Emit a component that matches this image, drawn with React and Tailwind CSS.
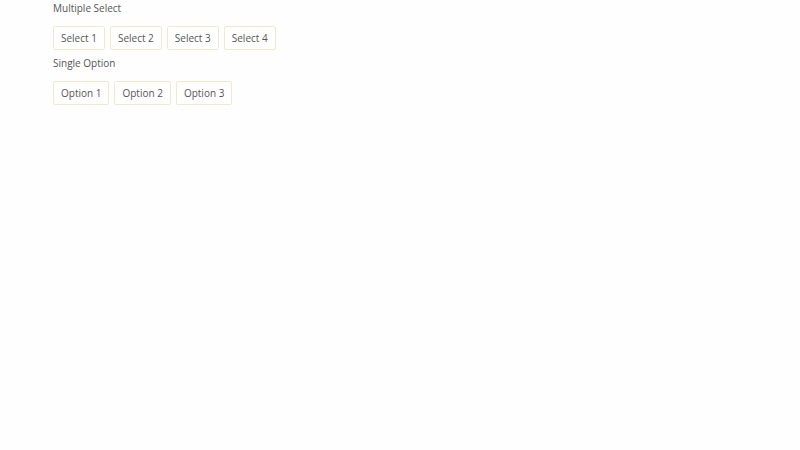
import { useState } from "react";

const multiple = ["Select 1", "Select 2", "Select 3", "Select 4"];
const single = ["Option 1", "Option 2", "Option 3"];

function OptionGroup({ label, items, isActive, onToggle }) {
  return (
    <section role="group" aria-label={label} className="flex flex-col gap-2.5">
      <h2 className="text-[10px] leading-4 text-[#555555]">{label}</h2>
      <div className="flex flex-wrap gap-[5px]">
        {items.map((item) => (
          <button
            key={item}
            type="button"
            aria-pressed={isActive(item)}
            onClick={() => onToggle(item)}
            className="h-6 rounded-xs border border-[#ececcc] bg-white px-[7px] text-[10px] leading-4 text-[#555555] aria-pressed:bg-[#f6f6d8]"
          >
            {item}
          </button>
        ))}
      </div>
    </section>
  );
}

export default function App() {
  const [selected, setSelected] = useState([]);
  const [option, setOption] = useState(null);

  const toggle = (item) =>
    setSelected((current) =>
      current.includes(item)
        ? current.filter((entry) => entry !== item)
        : [...current, item]
    );

  return (
    <main className="flex min-h-screen flex-col gap-[5px] bg-[#fefefe] px-[53px] font-['Open_Sans','Noto_Sans',sans-serif]">
      <OptionGroup
        label="Multiple Select"
        items={multiple}
        isActive={(item) => selected.includes(item)}
        onToggle={toggle}
      />
      <OptionGroup
        label="Single Option"
        items={single}
        isActive={(item) => option === item}
        onToggle={setOption}
      />
    </main>
  );
}
